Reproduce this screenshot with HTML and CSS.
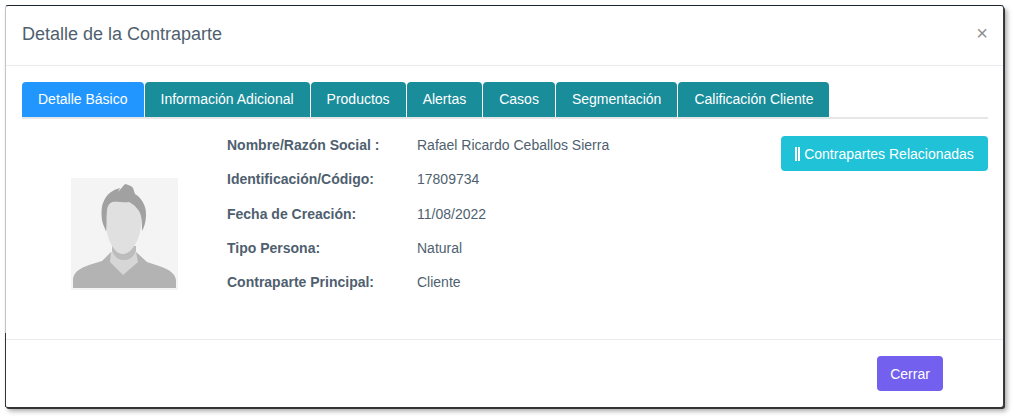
FILE: index.html
```html
<!DOCTYPE html>
<html lang="es">
<head>
  <meta charset="UTF-8">
  <title>Detalle de la Contraparte</title>
  <link rel="stylesheet" href="styles.css">
</head>
<body>
  <div class="modal">
    <div class="modal-header">
      <h4 class="modal-title">Detalle de la Contraparte</h4>
      <span class="modal-close">&times;</span>
    </div>

    <div class="modal-body">
      <ul class="tabs">
        <li class="tab tab-active">Detalle Básico</li>
        <li class="tab">Información Adicional</li>
        <li class="tab">Productos</li>
        <li class="tab">Alertas</li>
        <li class="tab">Casos</li>
        <li class="tab">Segmentación</li>
        <li class="tab">Calificación Cliente</li>
      </ul>

      <div class="detail">
        <div class="avatar-col">
          <svg class="avatar" viewBox="0 0 107 112" width="107" height="112">
            <rect width="107" height="112" fill="#f4f4f4"/>
            <path d="M2 110V101C3 94 9 90 18 87L31 83L40 74H65L76 84L91 89C99 92 104 96 105 102V110Z" fill="#b3b3b3"/>
            <path d="M40 74L39 84L52 97L67 84L65 74Z" fill="#d6d6d6"/>
            <path d="M41 73C44 80 48 82 53 82C58 82 62 80 65 73L65 68H41Z" fill="#bcbcbc"/>
            <path d="M31 40L35 54L37 47Z" fill="#d2d2d2"/>
            <path d="M35 36C35 26 43 22 53 22C63 22 70 26 70 36C71 47 69 58 65 65C61 72 57 76 52 76C47 76 43 72 40 66C36 58 34 47 35 36Z" fill="#e0e0e0"/>
            <path d="M35 53L32 46C30 40 30 30 32 25C35 17 40 13 46 11L49 10L47 14L54 6C58 7 61 8 62 10L64 16C68 18 72 23 74 29C76 36 75 46 71 53C71 45 71 38 68 33C64 27 60 25 58 24C52 25 46 23 42 24C38 25 36 29 36 33C35 40 36 47 35 53Z" fill="#a1a1a1"/>
          </svg>
        </div>

        <dl class="fields">
          <div class="field"><dt>Nombre/Razón Social :</dt><dd>Rafael Ricardo Ceballos Sierra</dd></div>
          <div class="field"><dt>Identificación/Código:</dt><dd>17809734</dd></div>
          <div class="field"><dt>Fecha de Creación:</dt><dd>11/08/2022</dd></div>
          <div class="field"><dt>Tipo Persona:</dt><dd>Natural</dd></div>
          <div class="field"><dt>Contraparte Principal:</dt><dd>Cliente</dd></div>
        </dl>

        <button class="btn btn-related"><span class="bars"></span>Contrapartes Relacionadas</button>
      </div>
    </div>

    <div class="modal-footer">
      <button class="btn btn-close">Cerrar</button>
    </div>
  </div>
</body>
</html>
```

FILE: styles.css
```css
body {
  margin: 0;
  height: 418px;
  overflow: hidden;
  background: #ffffff;
  font-family: "Liberation Sans", Arial, sans-serif;
  color: #4f5f6f;
}

.modal {
  box-sizing: border-box;
  width: 999px;
  height: 402px;
  margin: 5px 0 0 5px;
  display: flex;
  flex-direction: column;
  position: relative;
  background: #ffffff;
  border-radius: 3px;
  border-top: 1px solid #1c2630;
  border-left: 1px solid #c4c4c4;
  border-right: 1px solid #3a3f46;
  box-shadow: 1px 2px 0 #333333, 3px 4px 5px rgba(0, 0, 0, 0.35);
}

/* lower part of the left edge is darker */
.modal::before {
  content: "";
  position: absolute;
  left: -1px;
  top: 327px;
  bottom: 0;
  width: 1px;
  background: #333333;
}

.modal-header {
  height: 59px;
  flex-shrink: 0;
  display: flex;
  align-items: center;
  justify-content: space-between;
  padding: 0 16px 0 16px;
  border-bottom: 1px solid #e9ecef;
}

.modal-title {
  margin: 0;
  font-size: 18px;
  font-weight: 400;
  line-height: 55px;
  height: 57px;
  color: #4f5f6f;
}

.modal-close {
  font-size: 20px;
  line-height: 20px;
  margin: 0 -1px 6px 0;
  color: #909090;
}

.modal-body {
  flex: 1;
  padding: 16px 15px 0 16px;
}

.tabs {
  display: flex;
  gap: 1px;
  list-style: none;
  margin: 0;
  padding: 0;
  height: 35px;
  border-bottom: 2px solid #e4e6e8;
  box-sizing: content-box;
}

.tab {
  box-sizing: border-box;
  height: 35px;
  padding: 0 16px;
  font-size: 14px;
  line-height: 35px;
  color: #ffffff;
  background: #1a8d9b;
  border-radius: 4px 4px 0 0;
}

.tab-active {
  background: #2196ff;
}

.detail {
  display: flex;
  align-items: flex-start;
}

.avatar-col {
  width: 205px;
  flex-shrink: 0;
  padding-top: 59px;
  padding-left: 49px;
  box-sizing: border-box;
}

.avatar {
  display: block;
}

.fields {
  flex: 1;
  margin: 0;
  padding-top: 9px;
  font-size: 14px;
}

.field {
  display: flex;
  height: 34.3px;
  line-height: 34.3px;
}

.field dt {
  width: 190px;
  font-weight: 700;
}

.field dd {
  margin: 0;
}

.btn {
  border: none;
  color: #ffffff;
  font-family: inherit;
  font-size: 14px;
  border-radius: 4px;
}

.btn-related {
  margin-top: 17px;
  width: 207px;
  height: 35px;
  flex-shrink: 0;
  background: #20c2d8;
  padding: 0;
  display: flex;
  align-items: center;
  justify-content: center;
}

.bars {
  width: 1px;
  height: 14px;
  margin-right: 4px;
  border-left: 2px solid #ffffff;
  border-right: 2px solid #ffffff;
}

.modal-footer {
  height: 68px;
  flex-shrink: 0;
  box-sizing: border-box;
  display: flex;
  align-items: flex-start;
  justify-content: flex-end;
  padding: 16px 60px 0 0;
  border-top: 1px solid #e9ecef;
}

.btn-close {
  width: 66px;
  height: 35px;
  background: #7460ee;
}
```
